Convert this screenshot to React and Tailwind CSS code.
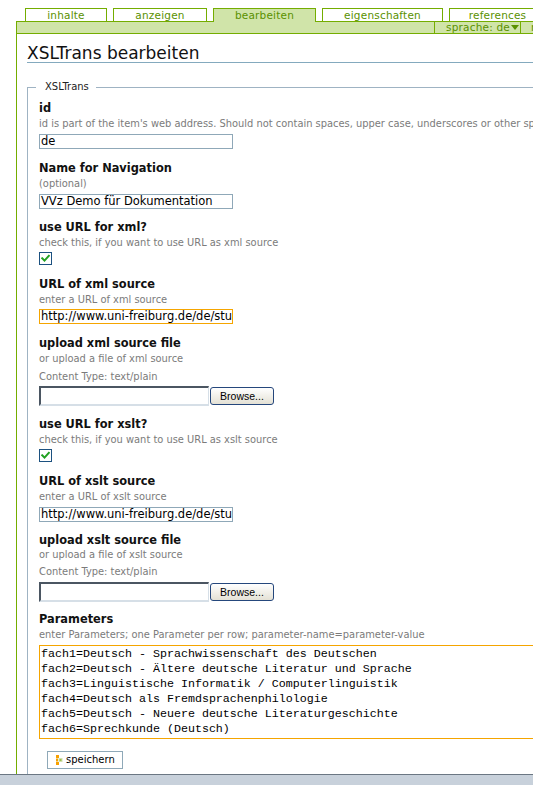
import React from "react";

function Label({ children, className = "" }) {
  return (
    <div className={"text-[11.4px] font-bold leading-[14px] text-[#111] whitespace-nowrap " + className}>
      {children}
    </div>
  );
}

function Desc({ children, className = "mt-[3px]" }) {
  return (
    <div className={"text-[9.9px] leading-[12px] text-[#7b7b7b] whitespace-nowrap " + className}>
      {children}
    </div>
  );
}

function TextBox({ value, orange = false, className = "mt-[4px]" }) {
  return (
    <div
      className={
        "w-[194px] h-[15px] border bg-white text-[11.5px] leading-[13px] pl-[1px] overflow-hidden whitespace-nowrap text-black " +
        (orange ? "border-[#f5a500] " : "border-[#8fa8b8] ") +
        className
      }
    >
      {value}
    </div>
  );
}

function Check() {
  return (
    <div className="mt-[3px] w-[13px] h-[13px] border border-[#1c5180] bg-white flex items-center justify-center">
      <svg width="9" height="9" viewBox="0 0 9 9">
        <path d="M1.2 4.3 L3.5 6.6 L7.8 1.8" fill="none" stroke="#21a121" strokeWidth="2" strokeLinecap="square" />
      </svg>
    </div>
  );
}

function FileRow({ ctClass = "mt-[6px]", rowClass = "mt-[3px]" }) {
  return (
    <>
      <Desc className={ctClass}>Content Type: text/plain</Desc>
      <div className={"flex items-center gap-[1px] " + rowClass}>
        <div className="w-[170px] h-[20px] bg-white border-t-2 border-l-2 border-b-2 border-r border-t-[#4b5662] border-l-[#4b5662] border-b-[#d6dfe7] border-r-[#d6dfe7]" />
        <div className="w-[64px] h-[18px] rounded-[3px] border border-[#25477c] bg-linear-to-b from-white to-[#e4e1d5] flex items-center justify-center text-[10.5px] leading-[12px] text-black font-['Liberation_Sans',sans-serif]">
          Browse...
        </div>
      </div>
    </>
  );
}

function Tab({ children, w, active = false }) {
  return (
    <div
      className={
        "border border-b-0 border-[#74ad00] text-center text-[10.5px] leading-[12px] tracking-[0.2px] text-[#5a9100] whitespace-nowrap shrink-0 " +
        (active ? "h-[14px] mb-[-1px] relative z-10 bg-[#d0e4a9] " : "h-[13px] bg-white ") +
        w
      }
    >
      {children}
    </div>
  );
}

export default function App() {
  return (
    <div className="w-[533px] h-[785px] overflow-hidden bg-white flex flex-col font-['DejaVu_Sans',sans-serif]">
      <div className="flex-1 min-h-0 overflow-hidden flex flex-col w-[1000px]">
        {/* tabs */}
        <div className="flex items-end gap-[6px] pl-[25px] pt-[8px]">
          <Tab w="w-[82px]">inhalte</Tab>
          <Tab w="w-[94px]">anzeigen</Tab>
          <Tab w="w-[103px]" active>bearbeiten</Tab>
          <Tab w="w-[121px]">eigenschaften</Tab>
          <Tab w="w-[97px]">references</Tab>
        </div>
        {/* bar */}
        <div className="ml-[16px] h-[13px] border-t border-b border-l border-[#74ad00] bg-[#d0e4a9] flex">
          <div className="w-[417px] shrink-0" />
          <div className="w-[87px] shrink-0 border-l border-r border-[#74ad00] flex items-center justify-end pr-[1px] text-[10.5px] leading-[11px] tracking-[0.2px] text-[#5a9100] whitespace-nowrap">
            <span>sprache: de</span>
            <svg width="8" height="5" viewBox="0 0 8 5" className="ml-[1px]">
              <path d="M0 0 L8 0 L4 5 Z" fill="#5a9100" />
            </svg>
          </div>
          <div className="pl-[10px] flex items-center text-[10.5px] leading-[11px] text-[#5a9100] whitespace-nowrap">
            rechte
          </div>
        </div>
        {/* main */}
        <div className="flex-1 min-h-0 ml-[16px] border-l border-[#74ad00] pl-[10px] flex flex-col overflow-hidden">
          <h1 className="mt-[11px] text-[17px] leading-[17px] font-normal text-[#111] border-b border-[#84aabe] whitespace-nowrap">
            XSLTrans bearbeiten
          </h1>
          <fieldset className="mt-[18px] border border-[#9fb3c3] pl-[11px] pt-[8px] pb-[200px] min-w-0">
            <legend className="ml-[-3px] pl-[9px] pr-[7px] text-[10px] leading-[12px] text-[#222]">XSLTrans</legend>

            <Label>id</Label>
            <Desc>
              id is part of the item's web address. Should not contain spaces, upper case, underscores or other special characters.
            </Desc>
            <TextBox value="de" />

            <Label className="mt-[12px]">Name for Navigation</Label>
            <Desc>(optional)</Desc>
            <TextBox value="VVz Demo für Dokumentation" />

            <Label className="mt-[11px]">use URL for xml?</Label>
            <Desc>check this, if you want to use URL as xml source</Desc>
            <Check />

            <Label className="mt-[12px]">URL of xml source</Label>
            <Desc>enter a URL of xml source</Desc>
            <TextBox value="http://www.uni-freiburg.de/de/studium/vvz.xml" orange className="mt-[3px]" />

            <Label className="mt-[12px]">upload xml source file</Label>
            <Desc>or upload a file of xml source</Desc>
            <FileRow />

            <Label className="mt-[11px]">use URL for xslt?</Label>
            <Desc>check this, if you want to use URL as xslt source</Desc>
            <Check />

            <Label className="mt-[12px]">URL of xslt source</Label>
            <Desc>enter a URL of xslt source</Desc>
            <TextBox value="http://www.uni-freiburg.de/de/studium/vvz.xsl" />

            <Label className="mt-[11px]">upload xslt source file</Label>
            <Desc className="mt-[2px]">or upload a file of xslt source</Desc>
            <FileRow ctClass="mt-[5px]" rowClass="mt-[4px]" />

            <Label className="mt-[10px]">Parameters</Label>
            <Desc>enter Parameters; one Parameter per row; parameter-name=parameter-value</Desc>
            <div className="mt-[4px] w-[700px] h-[94px] border border-[#f5a500] bg-white pt-[1px] pl-[1px] font-['Liberation_Mono',monospace] text-[11.67px] leading-[15px] text-black whitespace-pre">
              <div>fach1=Deutsch - Sprachwissenschaft des Deutschen</div>
              <div>fach2=Deutsch - Ältere deutsche Literatur und Sprache</div>
              <div>fach3=Linguistische Informatik / Computerlinguistik</div>
              <div>fach4=Deutsch als Fremdsprachenphilologie</div>
              <div>fach5=Deutsch - Neuere deutsche Literaturgeschichte</div>
              <div>fach6=Sprechkunde (Deutsch)</div>
            </div>

            <div className="mt-[12px] ml-[8px] w-[76px] h-[18px] border border-[#8fa9b8] bg-white flex items-center pl-[8px]">
              <svg width="8" height="10" viewBox="0 0 8 10" className="shrink-0">
                <rect x="0" y="0" width="3" height="3" fill="#f7a000" />
                <rect x="0" y="3.5" width="2" height="3" fill="#f7a000" />
                <rect x="2.5" y="3" width="4" height="4" fill="#d3e0b0" />
                <rect x="3.5" y="4" width="2" height="2" fill="#9fbf50" />
                <rect x="0" y="7" width="3" height="3" fill="#f7a000" />
              </svg>
              <span className="ml-[2px] text-[10px] leading-[12px] text-black">speichern</span>
            </div>
          </fieldset>
        </div>
      </div>
      <div className="h-[11px] shrink-0 border-t border-[#6b7783] bg-[#c8d1db]" />
    </div>
  );
}
